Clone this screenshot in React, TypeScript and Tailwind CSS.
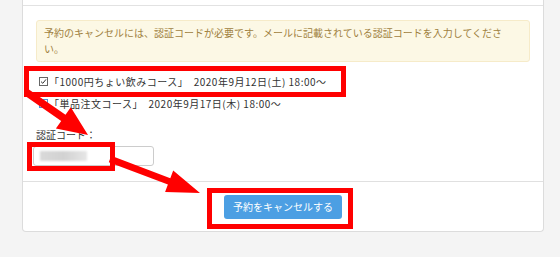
// CancelReservation — cancel form with verification code, annotated with red boxes and arrows
import React from "react";

function arrowPoints(
  x1: number,
  y1: number,
  x2: number,
  y2: number,
  shaft: number,
  headLen: number,
  headHalf: number
) {
  const dx = x2 - x1;
  const dy = y2 - y1;
  const len = Math.hypot(dx, dy);
  const ux = dx / len;
  const uy = dy / len;
  const nx = -uy;
  const ny = ux;
  const bx = x2 - ux * headLen;
  const by = y2 - uy * headLen;
  const pts = [
    [x1 + nx * shaft, y1 + ny * shaft],
    [bx + nx * shaft, by + ny * shaft],
    [bx + nx * headHalf, by + ny * headHalf],
    [x2, y2],
    [bx - nx * headHalf, by - ny * headHalf],
    [bx - nx * shaft, by - ny * shaft],
    [x1 - nx * shaft, y1 - ny * shaft],
  ];
  return pts.map((p) => p.map((v) => v.toFixed(1)).join(",")).join(" ");
}

function CourseRow({ checked, label }: { checked: boolean; label: string }) {
  return (
    <label className="flex items-center h-[22px] text-[10px] text-[#333] pl-[3px]">
      {checked ? (
        <span className="w-[9px] h-[9px] border border-[#666] bg-white flex items-center justify-center">
          <svg width="7" height="7" viewBox="0 0 7 7">
            <path d="M1 3.6 L2.8 5.3 L6 1.4" fill="none" stroke="#333" strokeWidth="1" />
          </svg>
        </span>
      ) : (
        <span className="w-[9px] h-[9px] border border-[#4a8fd8] bg-white" />
      )}
      <span className="ml-[1px] whitespace-nowrap tracking-[0.5px]">{label}</span>
    </label>
  );
}

export default function App() {
  return (
    <div
      className="relative w-[560px] h-[257px] overflow-hidden bg-[#f4f4f4]"
      style={{ fontFamily: '"Noto Sans CJK JP", "Noto Sans", sans-serif' }}
    >
      <div className="ml-[22px] w-[522px] bg-white border-x border-b border-[#dcdcdc] rounded-b-[4px]">
        <div className="h-[6px] border-b border-[#e2e2e2]" />

        <div className="px-[13px] pt-[14px] pb-[15px]">
          <div className="border border-[#f6ebc9] bg-[#fcf8e5] rounded-[3px] pl-[7px] pr-[20px] py-[4px] text-[10px] leading-[16px] text-[#a08140]">
            予約のキャンセルには、認証コードが必要です。メールに記載されている認証コードを入力してください。
          </div>

          <div className="mt-[8px]">
            <CourseRow checked label="「1000円ちょい飲みコース」　2020年9月12日(土) 18:00～" />
            <CourseRow checked={false} label="「単品注文コース」　2020年9月17日(木) 18:00～" />
          </div>

          <div className="mt-[14px] text-[10px] leading-[14px] text-[#333]">認証コード：</div>
          <div className="mt-[4px] ml-[-3px] w-[121px] h-[20px] border border-[#cccccc] rounded-[3px] bg-white flex items-center pl-[6px]">
            <div className="w-[47px] h-[10px] bg-gradient-to-r from-[#d9d9d9] via-[#d2d2d2] to-[#e6e6e6] blur-[1px]" />
          </div>
        </div>

        <div className="border-t border-[#e0e0e0] pt-[13px] pb-[12px] flex justify-center">
          <button className="h-[24px] px-[9px] rounded-[3px] bg-[#4c9fe3] text-white text-[10px] leading-none">
            予約をキャンセルする
          </button>
        </div>
      </div>

      {/* annotations */}
      <div className="absolute left-[24px] top-[66px] w-[322px] h-[31px] border-[5px] border-[#ff0000]" />
      <div className="absolute left-[27px] top-[142px] w-[88px] h-[29px] border-[5px] border-[#ff0000]" />
      <div className="absolute left-[207px] top-[188px] w-[146px] h-[41px] border-[5px] border-[#ff0000]" />
      <svg className="absolute left-0 top-0" width="560" height="257">
        <polygon points={arrowPoints(26, 92, 88, 135, 3.8, 30, 13)} fill="#ff0000" />
        <polygon points={arrowPoints(110, 159, 200, 193, 3.4, 33, 11.5)} fill="#ff0000" />
      </svg>
    </div>
  );
}
